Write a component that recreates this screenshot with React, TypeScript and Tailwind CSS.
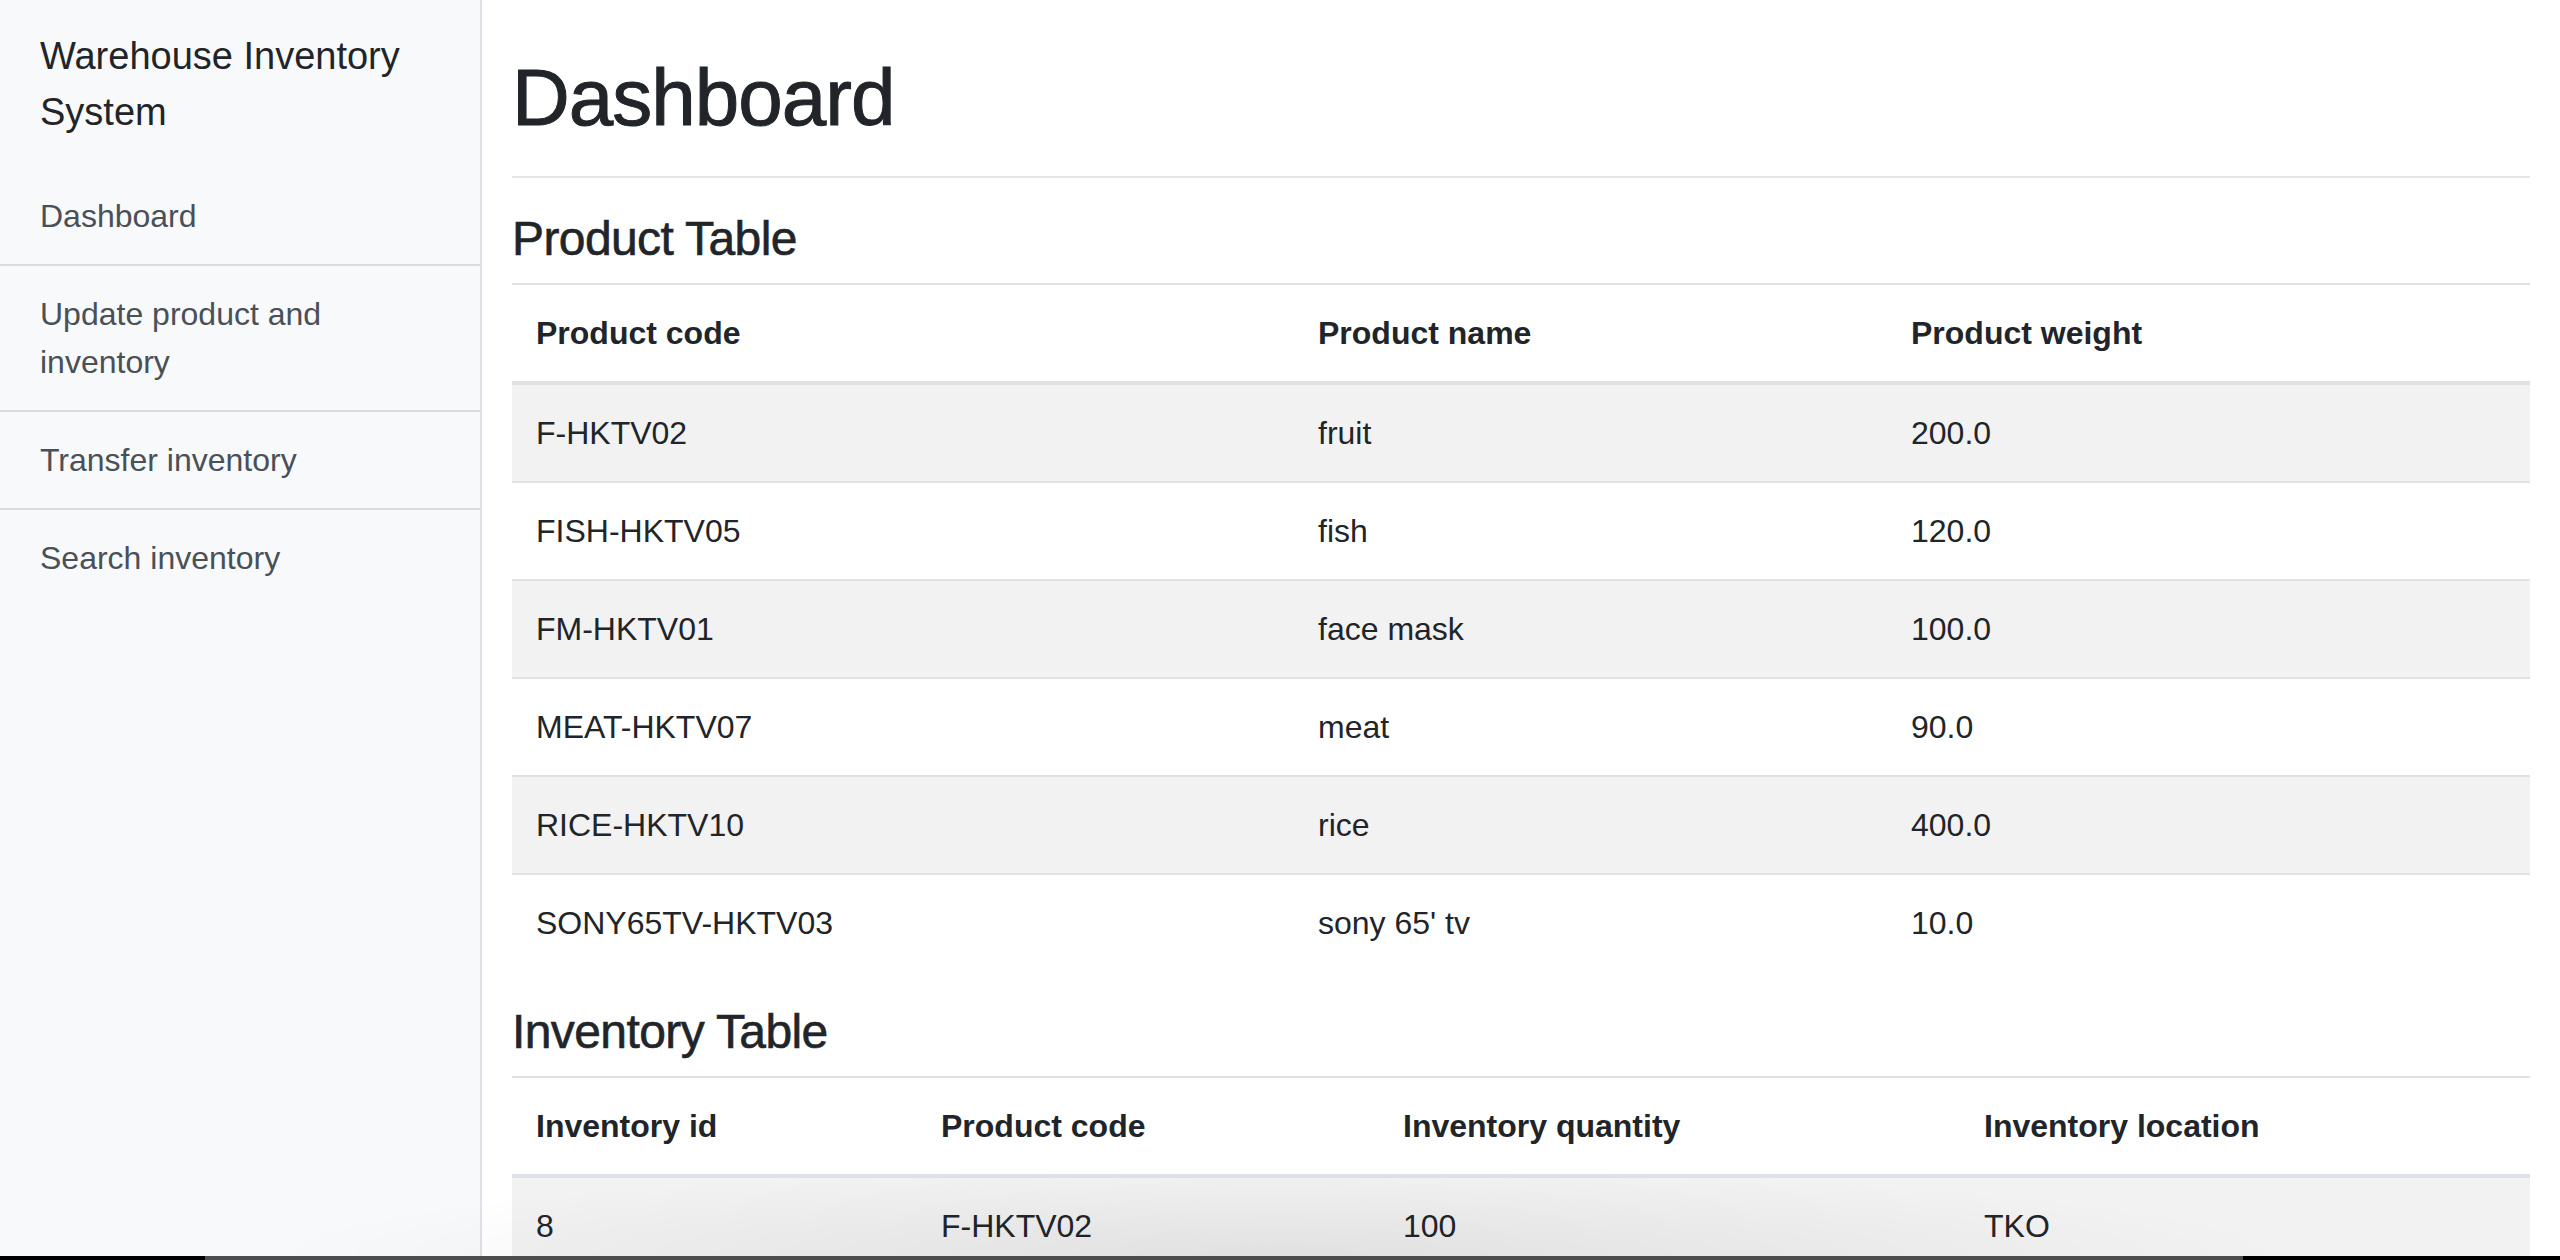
const products = [
	{ code: "F-HKTV02", name: "fruit", weight: "200.0" },
	{ code: "FISH-HKTV05", name: "fish", weight: "120.0" },
	{ code: "FM-HKTV01", name: "face mask", weight: "100.0" },
	{ code: "MEAT-HKTV07", name: "meat", weight: "90.0" },
	{ code: "RICE-HKTV10", name: "rice", weight: "400.0" },
	{ code: "SONY65TV-HKTV03", name: "sony 65' tv", weight: "10.0" },
];

const inventory = [{ id: "8", code: "F-HKTV02", qty: "100", location: "TKO" }];

const navItems = [
	"Dashboard",
	"Update product and inventory",
	"Transfer inventory",
	"Search inventory",
];

function Th({ children, w }: { children: React.ReactNode; w?: string }) {
	return (
		<th
			className={`${w ?? ""} text-left font-bold px-[24px] py-[24px] leading-[48px] border-t-2 border-b-4 border-[#dee2e6] align-bottom`}
		>
			{children}
		</th>
	);
}

function Td({ children }: { children: React.ReactNode }) {
	return (
		<td className="px-[24px] py-[24px] leading-[48px] border-t-2 border-[#dee2e6]">
			{children}
		</td>
	);
}

export default function App() {
	return (
		<div className="relative flex h-[1260px] overflow-hidden bg-white text-[#212529] font-['Liberation_Sans',Arial,sans-serif]">
			<aside className="w-[482px] shrink-0 bg-[#f8f9fa] border-r-2 border-[#dee2e6]">
				<div className="px-[40px] py-[28px] text-[38px] leading-[56px]">
					Warehouse Inventory System
				</div>
				<nav className="flex flex-col">
					{navItems.map((item, i) => (
						<div
							key={item}
							className={`px-[40px] py-[24px] text-[32px] leading-[48px] text-[#495057] ${
								i < navItems.length - 1 ? "border-b-2 border-[#dadbdd]" : ""
							}`}
						>
							{item}
						</div>
					))}
				</nav>
			</aside>

			<main className="flex-1 min-w-0 px-[30px] text-[32px]">
				<h1 className="mt-[48px] pt-[3px] text-[80px] leading-[93px] tracking-[-1px] [-webkit-text-stroke:1px_#212529]">
					Dashboard
				</h1>
				<hr className="mt-[32px] mb-[32px] border-t-2 border-[#e6e6e6]" />

				<h4 className="text-[48px] leading-[57px] tracking-[-0.6px] mb-[16px] [-webkit-text-stroke:0.6px_#212529]">
					Product Table
				</h4>
				<table className="w-full border-collapse mb-[32px]">
					<thead>
						<tr>
							<Th w="w-[782px]">Product code</Th>
							<Th w="w-[593px]">Product name</Th>
							<Th>Product weight</Th>
						</tr>
					</thead>
					<tbody>
						{products.map((p, i) => (
							<tr key={p.code} className={i % 2 === 0 ? "bg-[#f2f2f2]" : ""}>
								<Td>{p.code}</Td>
								<Td>{p.name}</Td>
								<Td>{p.weight}</Td>
							</tr>
						))}
					</tbody>
				</table>

				<h4 className="text-[48px] leading-[57px] tracking-[-0.6px] mb-[16px] [-webkit-text-stroke:0.6px_#212529]">
					Inventory Table
				</h4>
				<table className="w-full border-collapse">
					<thead>
						<tr>
							<Th w="w-[405px]">Inventory id</Th>
							<Th w="w-[462px]">Product code</Th>
							<Th w="w-[581px]">Inventory quantity</Th>
							<Th>Inventory location</Th>
						</tr>
					</thead>
					<tbody>
						{inventory.map((r, i) => (
							<tr key={r.id} className={i % 2 === 0 ? "bg-[#f2f2f2]" : ""}>
								<Td>{r.id}</Td>
								<Td>{r.code}</Td>
								<Td>{r.qty}</Td>
								<Td>{r.location}</Td>
							</tr>
						))}
					</tbody>
				</table>
			</main>

			{/* window shadow + bottom edge from the screenshot */}
			<div className="pointer-events-none absolute left-[250px] right-[250px] bottom-[4px] h-[90px] bg-[radial-gradient(ellipse_at_bottom,rgba(0,0,0,0.07),rgba(0,0,0,0)_70%)]" />
			<div className="absolute left-0 right-0 bottom-0 h-[4px] flex">
				<div className="w-[205px] bg-black" />
				<div className="flex-1 bg-[#4d4d4d]" />
				<div className="w-[317px] bg-black" />
			</div>
		</div>
	);
}
